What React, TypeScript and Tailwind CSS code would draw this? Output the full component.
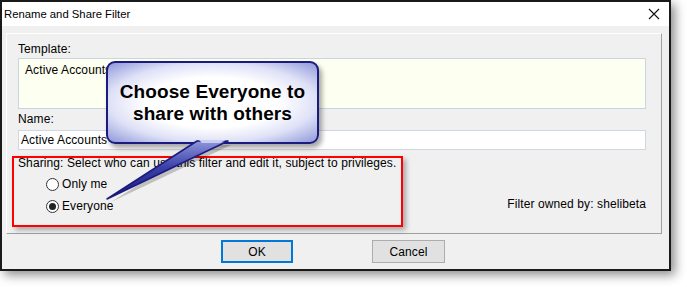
function Radio({ checked, label }: { checked?: boolean; label: string }) {
  return (
    <div className="flex items-center h-[22px]">
      <span className="w-[13px] h-[13px] rounded-full border border-[#333] bg-white flex items-center justify-center">
        {checked && <span className="w-[7px] h-[7px] rounded-full bg-[#222]" />}
      </span>
      <span className="ml-[3px]">{label}</span>
    </div>
  )
}

function Callout() {
  return (
    <>
      <div className="absolute left-[106px] top-[61px] w-[213px] h-[83px] rounded-[9px] border-2 border-[#1b1b7e] bg-[radial-gradient(ellipse_at_center,#ffffff_45%,#dfe2f7_70%,#8f97da_100%)] shadow-[3px_4px_5px_rgba(0,0,0,0.35)] flex flex-col items-center justify-center font-['Liberation_Sans',Arial,sans-serif] font-bold text-[19px] leading-[22px] text-black tracking-[0.1px]">
        <div>Choose Everyone to</div>
        <div>share with others</div>
      </div>
      <svg className="absolute left-[100px] top-[138px]" width="135" height="66" viewBox="0 0 135 66">
        <defs>
          <linearGradient id="tail" x1="0" y1="0" x2="0" y2="1">
            <stop offset="0" stopColor="#8e96da" />
            <stop offset="0.45" stopColor="#3a40a8" />
            <stop offset="1" stopColor="#1b1b7e" />
          </linearGradient>
        </defs>
        <path d="M99 4 L128 4 L8 61 Z" fill="#000" opacity="0.2" transform="translate(3 3)" />
        <path d="M97 3 L128 3 L7 61 Z" fill="url(#tail)" stroke="#1b1b7e" strokeWidth="1.5" strokeLinejoin="round" />
        <path d="M99 2 L126 2 L120 5 L102 5 Z" fill="#c9cdef" />
      </svg>
    </>
  )
}

export default function App() {
  return (
    <div className="relative w-[687px] h-[287px] bg-white font-['Liberation_Sans',Arial,sans-serif] text-[12px] tracking-[0.1px] text-black overflow-hidden">
      <div className="w-[671px] h-[271px] border-2 border-[#1a1a1a] bg-[#f0f0f0] shadow-[4px_4px_10px_rgba(0,0,0,0.45)] flex flex-col">
        <div className="h-[24px] bg-white flex items-center justify-between pl-[2px] pr-[9px]">
          <span className="text-[11.3px] tracking-normal">Rename and Share Filter</span>
          <svg width="12" height="12" viewBox="0 0 12 12">
            <path d="M1 1 L11 11 M11 1 L1 11" stroke="#111" strokeWidth="1.1" />
          </svg>
        </div>
        <div className="flex-1 flex flex-col pl-[4px] pt-[7px]">
          <div className="w-[656px] h-[201px] border border-t-white border-l-white border-r-[#a0a0a0] border-b-[#a0a0a0] pl-[11px] pt-[8px] flex flex-col">
            <div className="leading-[14px]">Template:</div>
            <div className="mt-[2px] w-[628px] h-[51px] border border-[#c9d5e3] bg-[#fdfff0] px-[6px] pt-[4px] leading-[14px]">
              Active Accounts
            </div>
            <div className="mt-[3px] leading-[14px]">Name:</div>
            <div className="mt-[4px] w-[628px] h-[20px] border border-[#cfd8e2] bg-white px-[2px] flex items-center">
              Active Accounts
            </div>
            <div className="mt-[6px] flex items-end justify-between w-[628px]">
              <div>
                <div className="leading-[14px]">Sharing: Select who can use this filter and edit it, subject to privileges.</div>
                <div className="pl-[28px] mt-[3px]">
                  <Radio label="Only me" />
                  <Radio checked label="Everyone" />
                </div>
              </div>
              <div className="mb-[4px]">Filter owned by: shelibeta</div>
            </div>
          </div>
          <div className="mt-[6px] flex pl-[215px]">
            <button className="w-[72px] h-[23px] border-2 border-[#0078d7] bg-[#e1e1e1]">OK</button>
            <button className="ml-[79px] w-[73px] h-[23px] border border-[#adadad] bg-[#e1e1e1]">Cancel</button>
          </div>
        </div>
      </div>
      <div className="absolute left-[12px] top-[156px] w-[391px] h-[71px] border-2 border-[#ff0000] shadow-[3px_3px_5px_rgba(0,0,0,0.3)]" />
      <Callout />
    </div>
  )
}
